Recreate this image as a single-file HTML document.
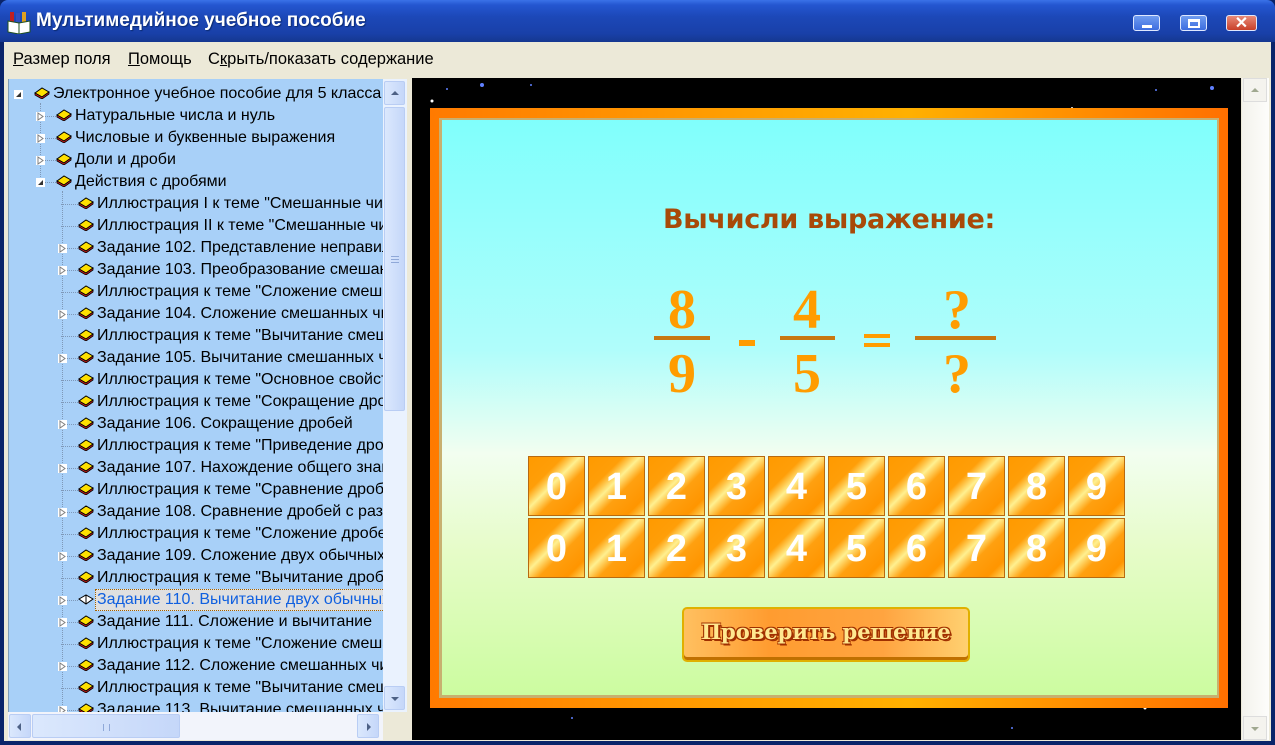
<!DOCTYPE html>
<html><head><meta charset="utf-8">
<style>
*{margin:0;padding:0;box-sizing:border-box}
body{width:1275px;height:745px;overflow:hidden;background:#0a246a;font-family:"Liberation Sans",sans-serif;position:relative}
.abs{position:absolute}
#title{left:0;top:0;width:1275px;height:42px;background:linear-gradient(#3a72e8 0%,#2456d0 12%,#1c48b8 40%,#1940a8 80%,#15378f 100%);border-radius:8px 8px 0 0}
#title span{position:absolute;left:36px;top:10px;color:#fff;font-weight:bold;font-size:19px;text-shadow:1px 1px 1px #0b2a70}
.wb{position:absolute;top:15px;width:27px;height:16px;border:1px solid #dfe8ff;border-radius:3px;background:linear-gradient(#6f9cf0,#3d6de0)}
#frame{left:4px;top:42px;width:1267px;height:699px;background:#ece9d8}
#menu{left:4px;top:42px;width:1267px;height:34px;font-size:16.5px;color:#000}
#menu span{position:absolute;top:8px}
#tree{left:8px;top:79px;width:375px;height:633px;background:#a8d0f8;overflow:hidden;border-left:1px solid #7f9db9}
.row{position:absolute;height:22px;font-size:16px;white-space:nowrap;line-height:22px;color:#000}
.exp{position:absolute;width:9px;height:9px;background:#fff}
.bk{position:absolute;width:16px;height:12px}
.vl{position:absolute;border-left:1px dotted #7e98b8;width:0}
.hl{position:absolute;border-top:1px dotted #7e98b8;height:0}
#vs{left:383px;top:79px;width:24px;height:633px;background:#eaf2fe}
.sbtn{position:absolute;background:linear-gradient(90deg,#dbe8fd,#c5d7f9);border:1px solid #b9cdf4;border-radius:2px}
#hs{left:8px;top:712px;width:399px;height:28px;background:#f2f4fb}
#main{left:412px;top:78px;width:829px;height:662px;background:#000;overflow:hidden}
#rvs{left:1242px;top:78px;width:27px;height:662px;background:linear-gradient(90deg,#f3f2ec,#fdfdfb)}
.tile{position:absolute;width:57px;height:60px;border:1px solid #b86a10;background:linear-gradient(135deg,#ff9a00 0%,#ff9e08 30%,#fff090 45%,#ffa010 60%,#ff9500 85%,#ffd860 100%);color:#fff;font-family:"Liberation Sans",sans-serif;font-weight:bold;font-size:38px;text-align:center;line-height:60px}
.num{position:absolute;font-family:"Liberation Serif",serif;font-weight:bold;color:#ff9c00;font-size:56px;text-align:center;width:80px;line-height:56px}
.bar{position:absolute;height:4px;background:#c87810}
</style></head><body>
<div id="title" class="abs">
<svg style="position:absolute;left:7px;top:12px" width="24" height="22"><rect x="3" y="0" width="4" height="10" fill="#c02020"/><rect x="9" y="1" width="4" height="9" fill="#3050c0"/><rect x="15" y="0" width="4" height="10" fill="#e0a020"/><path d="M1 9 L12 11 L23 9 L23 20 L12 22 L1 20Z" fill="#fff" stroke="#205020"/><path d="M12 11 V22" stroke="#205020"/></svg>
<span>Мультимедийное учебное пособие</span>
<div class="wb" style="left:1133px"><div style="position:absolute;left:8px;top:9px;width:10px;height:3px;background:#fff"></div></div>
<div class="wb" style="left:1180px"><div style="position:absolute;left:7px;top:3px;width:12px;height:9px;border:2px solid #fff;border-top-width:3px"></div></div>
<div class="wb" style="left:1226px;width:31px;background:linear-gradient(#e88a78,#c8402a)"><div style="position:absolute;left:0;top:-3px;width:29px;text-align:center;color:#fff;font-weight:bold;font-size:16px">✕</div></div>
</div>
<div id="frame" class="abs"></div>
<div id="menu" class="abs">
<span style="left:9px"><u>Р</u>азмер поля</span>
<span style="left:124px"><u>П</u>омощь</span>
<span style="left:204px">С<u>к</u>рыть/показать содержание</span>
</div>
<div id="tree" class="abs">
<svg width="0" height="0" style="position:absolute"><defs><g id="b"><path d="M1 6 L8 1 L15 5 L8 10Z" fill="#ffe000" stroke="#000" stroke-width="1"/><path d="M1 6 L1 8 L8 12 L15 7 L15 5 L8 10Z" fill="#d02020" stroke="#000" stroke-width="0.8"/></g></defs></svg>
<div id="rows"></div>
</div>
<div id="vs" class="abs">
<div class="sbtn" style="left:1px;top:2px;width:21px;height:24px"><div style="position:absolute;left:6px;top:9px;border:4px solid transparent;border-bottom:4px solid #4d6185;border-top:0"></div></div>
<div class="sbtn" style="left:1px;top:28px;width:21px;height:304px"><div style="position:absolute;left:6px;top:148px;width:8px;height:7px;border-top:1px solid #8fa8d8;border-bottom:1px solid #8fa8d8"><div style="margin-top:2px;height:1px;background:#8fa8d8"></div></div></div>
<div class="sbtn" style="left:1px;top:607px;width:21px;height:24px"><div style="position:absolute;left:6px;top:10px;border:4px solid transparent;border-top:4px solid #4d6185;border-bottom:0"></div></div>
</div>
<div id="hs" class="abs">
<div class="sbtn" style="left:1px;top:2px;width:22px;height:24px"><div style="position:absolute;left:7px;top:8px;border:4px solid transparent;border-right:4px solid #4d6185;border-left:0"></div></div>
<div class="sbtn" style="left:24px;top:2px;width:148px;height:24px"><div style="position:absolute;left:70px;top:9px;width:7px;height:7px;border-left:1px solid #8fa8d8;border-right:1px solid #8fa8d8"></div></div>
<div class="sbtn" style="left:349px;top:2px;width:22px;height:24px"><div style="position:absolute;left:9px;top:8px;border:4px solid transparent;border-left:4px solid #4d6185;border-right:0"></div></div>
<div style="position:absolute;left:375px;top:0;width:24px;height:28px;background:#ece9d8"></div>
</div>
<div id="main" class="abs">
<svg class="abs" style="left:0;top:0" width="829" height="662">
<g fill="#6080ff"><circle cx="70" cy="7" r="2"/><circle cx="35" cy="11" r="1"/><circle cx="119" cy="7" r="1"/><circle cx="800" cy="10" r="2"/><circle cx="744" cy="12" r="1"/><circle cx="40" cy="585" r="1"/><circle cx="160" cy="640" r="1"/><circle cx="600" cy="650" r="1"/></g>
<g fill="#fff"><circle cx="20" cy="23" r="1.5"/><circle cx="660" cy="30" r="1"/><circle cx="814" cy="362" r="1"/><circle cx="733" cy="630" r="1.5"/></g>
</svg>
<div class="abs" style="left:18px;top:30px;width:798px;height:600px;background:linear-gradient(90deg,#ff7a00,#ff9800 30%,#ffb000 60%,#ff7000);"></div>
<div class="abs" style="left:27px;top:40px;width:780px;height:580px;background:#c8b070"></div>
<div class="abs" style="left:30px;top:42px;width:775px;height:575px;background:linear-gradient(#80fffc 0%,#b0fdfb 40%,#f2fef0 58%,#e6fcc8 75%,#ccfca0 100%)"></div>
<div class="abs" style="left:18px;top:126px;width:798px;text-align:center;font-family:'DejaVu Sans',sans-serif;font-weight:bold;font-size:27px;color:#a84a08;letter-spacing:-0.3px">Вычисли выражение:</div>
<div class="num" style="left:230px;top:204px">8</div>
<div class="bar" style="left:242px;top:258px;width:56px"></div>
<div class="num" style="left:230px;top:268px">9</div>
<div class="bar" style="left:327px;top:262px;width:16px;height:6px;background:#ff9c00"></div>
<div class="num" style="left:355px;top:204px">4</div>
<div class="bar" style="left:368px;top:258px;width:55px"></div>
<div class="num" style="left:355px;top:268px">5</div>
<div class="bar" style="left:452px;top:256px;width:26px;height:4px;background:#ff9c00"></div>
<div class="bar" style="left:452px;top:265px;width:26px;height:4px;background:#ff9c00"></div>
<div class="num" style="left:505px;top:204px">?</div>
<div class="bar" style="left:503px;top:258px;width:81px"></div>
<div class="num" style="left:505px;top:268px">?</div>
<div id="tiles"></div>
<div class="abs" style="left:270px;top:529px;width:288px;height:55px;border:2px solid #e0b000;border-radius:5px;background:linear-gradient(90deg,#ffc060,#ff9c30 30%,#ffa440 70%,#ffd070);box-shadow:inset 0 -3px 0 #c07000"></div>
<div class="abs" style="left:270px;top:541px;width:288px;text-align:center;font-family:'DejaVu Serif',serif;font-weight:bold;font-size:21px;color:#ffe890;text-shadow:-1px -1px 0 #a03000,1px -1px 0 #a03000,-1px 1px 0 #a03000,1px 1px 0 #a03000,2px 2px 0 #a03000">Проверить решение</div>
</div>
<div id="rvs" class="abs">
<div style="position:absolute;left:1px;top:0;width:24px;height:24px;background:#f4f3ee;border:1px solid #ddd"><div style="position:absolute;left:7px;top:9px;border:4px solid transparent;border-bottom:4px solid #a0a890;border-top:0"></div></div>
<div style="position:absolute;left:1px;top:638px;width:24px;height:24px;background:#f4f3ee;border:1px solid #ddd"><div style="position:absolute;left:7px;top:10px;border:4px solid transparent;border-top:4px solid #a0a890;border-bottom:0"></div></div>
</div>
<script>
var R=[[0,2,"Электронное учебное пособие для 5 класса"],[1,1,"Натуральные числа и нуль"],[1,1,"Числовые и буквенные выражения"],[1,1,"Доли и дроби"],[1,2,"Действия с дробями"],
[2,0,'Иллюстрация I к теме "Смешанные числа"'],[2,0,'Иллюстрация II к теме "Смешанные числа"'],[2,1,"Задание 102. Представление неправильной"],[2,1,"Задание 103. Преобразование смешанных"],
[2,0,'Иллюстрация к теме "Сложение смешанных'],[2,1,"Задание 104. Сложение смешанных чисел"],[2,0,'Иллюстрация к теме "Вычитание смешанных'],[2,1,"Задание 105. Вычитание смешанных чисел"],
[2,0,'Иллюстрация к теме "Основное свойство'],[2,0,'Иллюстрация к теме "Сокращение дробей'],[2,1,"Задание 106. Сокращение дробей"],[2,0,'Иллюстрация к теме "Приведение дробей'],
[2,1,"Задание 107. Нахождение общего знаменателя"],[2,0,'Иллюстрация к теме "Сравнение дробей'],[2,1,"Задание 108. Сравнение дробей с разными"],[2,0,'Иллюстрация к теме "Сложение дробей'],
[2,1,"Задание 109. Сложение двух обычных дробей"],[2,0,'Иллюстрация к теме "Вычитание дробей'],[2,1,"Задание 110. Вычитание двух обычных дробей",1],[2,1,"Задание 111. Сложение и вычитание"],
[2,0,'Иллюстрация к теме "Сложение смешанных'],[2,1,"Задание 112. Сложение смешанных чисел"],[2,0,'Иллюстрация к теме "Вычитание смешанных'],[2,1,"Задание 113. Вычитание смешанных чисел"]];
var h='';
h+='<div class="vl" style="left:31px;top:24px;height:80px"></div>';
h+='<div class="vl" style="left:53px;top:112px;height:540px"></div>';
R.forEach(function(r,i){var y=4+22*i,l=r[0],ex=9+22*l,ic=25+22*l,tx=44+22*l;
 if(l>0)h+='<div class="hl" style="left:'+(ex-1)+'px;top:'+(y+11)+'px;width:'+(ic-ex+1)+'px"></div>';
 if(r[1]==1)h+='<div class="exp" style="left:'+(ex-4)+'px;top:'+(y+7)+'px"><svg width="9" height="9" style="position:absolute;left:0;top:0"><path d="M2 1 L7 4.5 L2 8Z" fill="#fff" stroke="#808080"/></svg></div>';
 if(r[1]==2)h+='<div class="exp" style="left:'+(ex-4)+'px;top:'+(y+7)+'px"><svg width="9" height="9" style="position:absolute;left:0;top:0"><path d="M7 2 L7 7 L2 7Z" fill="#333"/></svg></div>';
 if(r[3])h+='<svg class="bk" style="left:'+ic+'px;top:'+(y+5)+'px" viewBox="0 0 16 12"><path d="M1 5 L8 1 L15 5 L8 10Z" fill="#fff" stroke="#000"/><path d="M8 1 V10" stroke="#000"/></svg>';
 else h+='<svg class="bk" style="left:'+ic+'px;top:'+(y+4)+'px" viewBox="0 0 16 12"><use href="#b"/></svg>';
 if(r[3])h+='<div class="row" style="left:'+(tx-2)+'px;top:'+y+'px;background:#e0e0e0;border:1px dotted #a06000;color:#1060e0;padding:0 1px;line-height:20px;width:300px">'+r[2]+'</div>';
 else h+='<div class="row" style="left:'+tx+'px;top:'+y+'px">'+r[2]+'</div>';
});
document.getElementById('rows').innerHTML=h;
var t='';for(var k=0;k<2;k++)for(var d=0;d<10;d++)t+='<div class="tile" style="left:'+(116+60*d)+'px;top:'+(378+62*k)+'px">'+d+'</div>';
document.getElementById('tiles').innerHTML=t;
</script>
</body></html>
